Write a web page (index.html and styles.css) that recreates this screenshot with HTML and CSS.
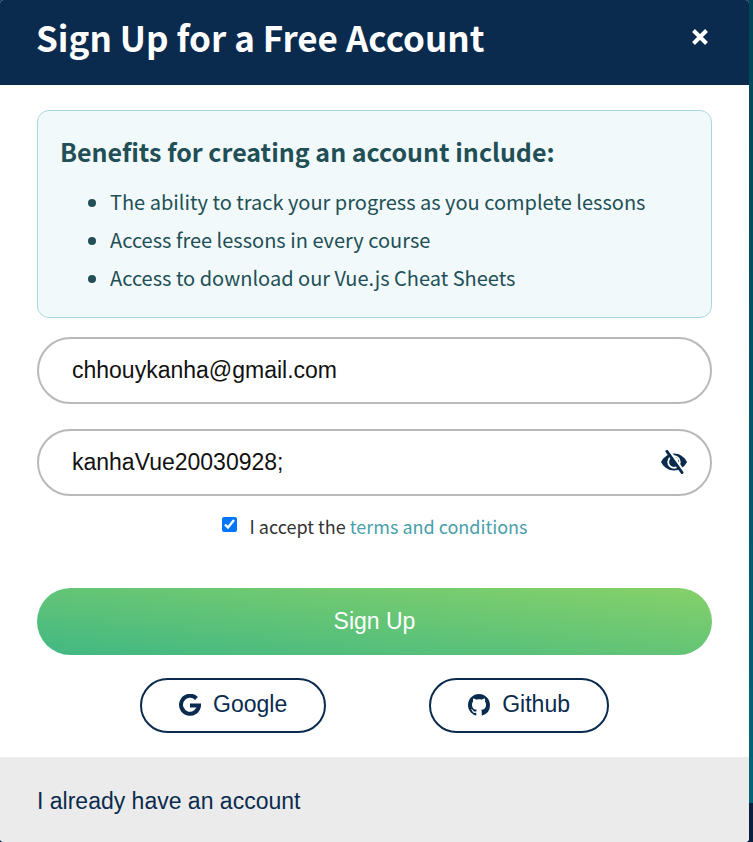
FILE: index.html
```html
<!DOCTYPE html>
<html lang="en">
<head>
<meta charset="utf-8">
<title>Sign Up</title>
<link rel="stylesheet" href="styles.css">
</head>
<body>
<main class="modal">
  <header class="modal-header">
    <h1>Sign Up for a Free Account</h1>
    <button class="close" type="button" aria-label="Close">
      <svg viewBox="0 0 18 18" width="18" height="18"><path d="M2.500 2.500l13 13M15.500 2.500l-13 13" stroke="currentColor" stroke-width="4"/></svg>
    </button>
  </header>
  <form class="modal-body">
    <section class="benefits">
      <h2>Benefits for creating an account include:</h2>
      <ul>
        <li>The ability to track your progress as you complete lessons</li>
        <li>Access free lessons in every course</li>
        <li>Access to download our Vue.js Cheat Sheets</li>
      </ul>
    </section>
    <input class="field" type="email" aria-label="Email" value="chhouykanha@gmail.com">
    <div class="password">
      <input class="field" type="text" aria-label="Password" value="kanhaVue20030928;">
      <button class="toggle" type="button" aria-label="Hide password">
        <svg viewBox="0 0 26 24" width="26" height="24">
          <path d="M0 12C3 6.500 7.500 3.500 13 3.500S23 6.500 26 12C23 17.500 18.500 20.500 13 20.500S3 17.500 0 12Z" fill="currentColor"/>
          <circle cx="13" cy="12" r="5.800" fill="currentColor" stroke="#fff" stroke-width="1.800"/>
          <circle cx="15" cy="10" r="2.200" fill="#fff"/>
          <path d="M8 0L23 22" stroke="#fff" stroke-width="2.500"/>
          <path d="M6 1.500L21 22.500" stroke="currentColor" stroke-width="3" stroke-linecap="round"/>
        </svg>
      </button>
    </div>
    <div class="terms">
      <input id="terms" type="checkbox" checked>
      <label for="terms">I accept the <a href="#">terms and conditions</a></label>
    </div>
    <button class="submit" type="submit">Sign Up</button>
    <div class="providers">
      <button class="provider" type="button">
        <svg viewBox="0 0 22 22" width="22" height="22"><path d="M17.500 4.500A9 9 0 1 0 20 11.500H11" fill="none" stroke="currentColor" stroke-width="4"/></svg>
        Google
      </button>
      <button class="provider" type="button">
        <svg viewBox="0 0 16 16" width="22" height="22"><path fill="currentColor" d="M8 0C3.58 0 0 3.58 0 8c0 3.54 2.29 6.53 5.47 7.59.4.07.55-.17.55-.38 0-.19-.01-.82-.01-1.490-2.010.37-2.530-.49-2.690-.94-.09-.23-.48-.94-.82-1.130-.28-.15-.68-.52-.01-.53.63-.01 1.080.58 1.230.82.72 1.210 1.870.87 2.330.66.07-.52.28-.87.51-1.070-1.780-.2-3.640-.89-3.640-3.950 0-.87.31-1.590.82-2.150-.08-.2-.36-1.020.08-2.120 0 0 .67-.21 2.200.82.64-.18 1.320-.27 2-.27s1.360.09 2 .27c1.530-1.040 2.200-.82 2.200-.82.44 1.100.16 1.920.08 2.120.51.56.82 1.270.82 2.150 0 3.070-1.870 3.750-3.650 3.950.29.25.54.73.54 1.480 0 1.070-.01 1.930-.01 2.200 0 .21.15.46.55.38A8.010 8.010 0 0 0 16 8c0-4.420-3.580-8-8-8z"/></svg>
        Github
      </button>
    </div>
  </form>
  <footer class="modal-footer"><a href="#">I already have an account</a></footer>
</main>
</body>
</html>
```
FILE: styles.css
```css
* { box-sizing: border-box; }
body {
  margin: 0;
  padding-right: 4px;
  min-height: 100vh;
  display: flex;
  background: linear-gradient(#004557, #006478 803px, #0b1f3f 803px);
  font-family: "Noto Sans CJK SC", "Noto Sans", sans-serif;
}
h1, h2, ul { margin: 0; }
button, input { font-family: "Liberation Sans", Arial, sans-serif; font-size: 23px; }
button { cursor: pointer; padding: 0; border: 0; background: none; color: #0a2b4e; }
svg { display: block; }
a { text-decoration: none; }
.modal {
  flex: 1;
  display: flex;
  flex-direction: column;
  background: #fff;
  border-radius: 4px;
  overflow: hidden;
}
.modal-header {
  display: flex;
  align-items: center;
  justify-content: space-between;
  padding: 13px 40px 24px 36px;
  background: #0a2b4e;
  color: #fff;
}
h1 { font-size: 35px; line-height: 48px; font-weight: 700; }
.close { color: #fff; }
.modal-body {
  flex: 1;
  display: flex;
  flex-direction: column;
  padding: 25px 37px 24px;
}
.benefits {
  padding: 22px 22px 20px;
  margin-bottom: 19px;
  border: 1px solid #a8d8de;
  border-radius: 12px;
  background: #f1f9fa;
  color: #224f56;
}
h2 { font-size: 25px; line-height: 36px; font-weight: 700; margin-bottom: 14px; }
ul { padding-left: 50px; font-size: 20px; line-height: 38px; }
.field {
  width: 100%;
  height: 67px;
  padding: 0 70px 0 33px;
  border: 2px solid #b9b9b9;
  border-radius: 34px;
  background: #fff;
  color: #111;
}
.password { position: relative; margin-top: 25px; }
.toggle { position: absolute; right: 25px; top: 21px; }
.terms {
  display: flex;
  justify-content: center;
  align-items: center;
  gap: 13px;
  margin: 14px 0 46px;
  font-size: 18px;
  line-height: 32px;
  color: #333;
}
.terms input { width: 15px; height: 15px; margin: 0 0 3px; accent-color: #0075ff; }
.terms a { color: #48a0aa; }
.submit {
  height: 67px;
  border-radius: 34px;
  background: linear-gradient(to top right, #41b883, #86d169);
  color: #fff;
}
.providers { display: flex; justify-content: space-evenly; margin-top: 23px; }
.provider {
  display: flex;
  align-items: center;
  gap: 12px;
  height: 55px;
  padding: 0 37px 2px;
  border: 2px solid #0a2b4e;
  border-radius: 28px;
}
.modal-footer {
  padding: 30px 37px 27px;
  background: #ebebeb;
  font: 23px/28px "Liberation Sans", Arial, sans-serif;
}
.modal-footer a { color: #0a2b4e; }
```
